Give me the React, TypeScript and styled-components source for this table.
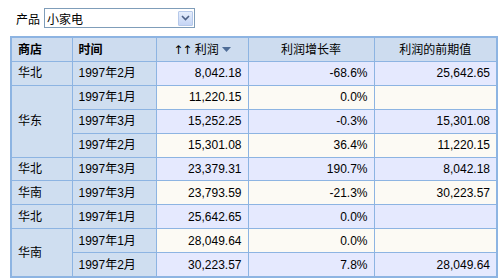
import React from 'react';
import styled, { createGlobalStyle } from 'styled-components';

const GlobalStyle = createGlobalStyle`
    body {
        margin: 0;
        background: #ffffff;
        font-family: "Liberation Sans", Arial, "Noto Sans CJK SC", sans-serif;
        font-size: 12px;
        color: #000;
    }
`;

const Page = styled.div`
    padding: 8px 0 0 10px;
`;

const Filter = styled.div`
    display: flex;
    align-items: center;
    gap: 4px;
    padding-left: 6px;
    height: 20px;
    margin-bottom: 8px;
`;

const Label = styled.span`
    font-size: 12px;
`;

const Select = styled.div`
    width: 147px;
    height: 18px;
    border: 1px solid #7f9db9;
    display: flex;
    align-items: center;
    justify-content: space-between;
    padding-left: 2px;
    box-sizing: content-box;
`;

const DropButton = styled.div`
    width: 15px;
    height: 15px;
    margin-right: 1px;
    border: 1px solid #b6c9ea;
    border-radius: 1px;
    background: linear-gradient(#e6eefc, #c5d5f5);
    display: flex;
    align-items: center;
    justify-content: center;
    box-sizing: border-box;
`;

const Table = styled.table`
    border-collapse: collapse;
    border: 2px solid #8db4e2;
    table-layout: fixed;
    width: 486px;
    line-height: 14px;
`;

const Th = styled.th<{ $align?: string; $bold?: boolean }>`
    background: #cddcef;
    border: 1px solid #8db4e2;
    height: 23px;
    padding: 0 6px;
    font-weight: ${p => (p.$bold ? 'bold' : 'normal')};
    text-align: ${p => p.$align || 'center'};
    white-space: nowrap;
`;

const RowHead = styled.td`
    background: #cfdef0;
    border: 1px solid #8db4e2;
    padding: 0 6px;
    height: 22.9px;
    white-space: nowrap;
`;

const Cell = styled.td<{ $odd: boolean }>`
    background: ${p => (p.$odd ? '#e5e9fe' : '#fcfaf4')};
    border: 1px solid #8db4e2;
    padding: 0 6px;
    height: 22.9px;
    text-align: right;
    white-space: nowrap;
`;

const SortMark = styled.span`
    display: inline-flex;
    align-items: center;
    gap: 3px;
`;

const Arrows = styled.span`
    font-family: "DejaVu Sans", sans-serif;
    font-size: 12px;
    letter-spacing: -1px;
`;

const rows = [
    { store: '华北', span: 1, time: '1997年2月', profit: '8,042.18', rate: '-68.6%', prev: '25,642.65' },
    { store: '华东', span: 3, time: '1997年1月', profit: '11,220.15', rate: '0.0%', prev: '' },
    { store: '', span: 0, time: '1997年3月', profit: '15,252.25', rate: '-0.3%', prev: '15,301.08' },
    { store: '', span: 0, time: '1997年2月', profit: '15,301.08', rate: '36.4%', prev: '11,220.15' },
    { store: '华北', span: 1, time: '1997年3月', profit: '23,379.31', rate: '190.7%', prev: '8,042.18' },
    { store: '华南', span: 1, time: '1997年3月', profit: '23,793.59', rate: '-21.3%', prev: '30,223.57' },
    { store: '华北', span: 1, time: '1997年1月', profit: '25,642.65', rate: '0.0%', prev: '' },
    { store: '华南', span: 2, time: '1997年1月', profit: '28,049.64', rate: '0.0%', prev: '' },
    { store: '', span: 0, time: '1997年2月', profit: '30,223.57', rate: '7.8%', prev: '28,049.64' },
];

function App() {
    return (
        <Page>
            <GlobalStyle />
            <Filter>
                <Label>产品</Label>
                <Select>
                    <span>小家电</span>
                    <DropButton>
                        <svg width="9" height="6" viewBox="0 0 9 6">
                            <path d="M1 1 L4.5 4.5 L8 1" fill="none" stroke="#4d6185" strokeWidth="1.6" />
                        </svg>
                    </DropButton>
                </Select>
            </Filter>
            <Table>
                <colgroup>
                    <col style={{ width: 61 }} />
                    <col style={{ width: 84 }} />
                    <col style={{ width: 92 }} />
                    <col style={{ width: 126 }} />
                    <col style={{ width: 123 }} />
                </colgroup>
                <thead>
                    <tr>
                        <Th $align="left" $bold>商店</Th>
                        <Th $align="left" $bold>时间</Th>
                        <Th>
                            <SortMark>
                                <span><Arrows>↑↑</Arrows> 利润</span>
                                <svg width="9" height="5" viewBox="0 0 9 5">
                                    <path d="M0 0 L9 0 L4.5 5 Z" fill="#4f6d97" />
                                </svg>
                            </SortMark>
                        </Th>
                        <Th>利润增长率</Th>
                        <Th>利润的前期值</Th>
                    </tr>
                </thead>
                <tbody>
                    {rows.map((r, i) => (
                        <tr key={i}>
                            {r.span > 0 && <RowHead rowSpan={r.span}>{r.store}</RowHead>}
                            <RowHead>{r.time}</RowHead>
                            <Cell $odd={i % 2 === 0}>{r.profit}</Cell>
                            <Cell $odd={i % 2 === 0}>{r.rate}</Cell>
                            <Cell $odd={i % 2 === 0}>{r.prev}</Cell>
                        </tr>
                    ))}
                </tbody>
            </Table>
        </Page>
    );
}

export default App;
